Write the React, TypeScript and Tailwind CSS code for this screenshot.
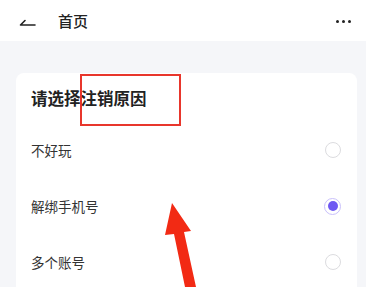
const reasons = [
  { label: "不好玩", checked: false },
  { label: "解绑手机号", checked: true },
  { label: "多个账号", checked: false },
];

const Radio = ({ checked }: { checked: boolean }) =>
  checked ? (
    <span className="flex h-[17px] w-[17px] items-center justify-center rounded-full border-[1.5px] border-[#c9c0fb]">
      <span className="h-[10px] w-[10px] rounded-full bg-[#6e58f2]" />
    </span>
  ) : (
    <span className="h-[16px] w-[16px] rounded-full border-[1.5px] border-[#dcdcdf]" />
  );

export default function App() {
  return (
    <div
      className="relative h-[287px] w-[366px] overflow-hidden bg-[#f5f6f9]"
      style={{ fontFamily: '"Noto Sans CJK SC", "Noto Sans", sans-serif' }}
    >
      <header className="flex h-[41px] items-center bg-white pl-[18px] pr-[15px]">
        <svg width="18" height="10" viewBox="0 0 18 10" fill="none" className="mt-[2px]">
          <path d="M17 8H2.5L7 3.5" stroke="#222" strokeWidth="1.6" strokeLinecap="round" strokeLinejoin="round" />
        </svg>
        <span className="ml-[22px] text-[15px] font-medium leading-none text-[#222]">首页</span>
        <div className="ml-auto flex gap-[2.5px] pt-[2px]">
          <span className="h-[3.5px] w-[3.5px] rounded-full bg-[#222]" />
          <span className="h-[3.5px] w-[3.5px] rounded-full bg-[#222]" />
          <span className="h-[3.5px] w-[3.5px] rounded-full bg-[#222]" />
        </div>
      </header>

      <main className="pl-[16px] pr-[9px] pt-[32px]">
        <div className="rounded-[8px] bg-white pb-[20px] pl-[15px] pr-[16px] pt-[13px]">
          <h1 className="text-[16.5px] font-semibold leading-[24px] text-[#222]">请选择注销原因</h1>
          <ul className="mt-[12px]">
            {reasons.map((r) => (
              <li key={r.label} className="flex h-[56px] items-center justify-between">
                <span className="text-[13.5px] text-[#333]">{r.label}</span>
                <Radio checked={r.checked} />
              </li>
            ))}
          </ul>
        </div>
      </main>

      {/* annotation overlay */}
      <div className="absolute left-[80px] top-[74px] h-[52px] w-[101px] border-[2.5px] border-[#e8362c]" />
      <svg className="absolute left-[150px] top-[195px]" width="70" height="92" viewBox="0 0 70 92">
        <path d="M22 8 L41 36 L34 37 L46 92 L35 92 L24 39 L15 40 Z" fill="#f22a14" />
      </svg>
    </div>
  );
}
